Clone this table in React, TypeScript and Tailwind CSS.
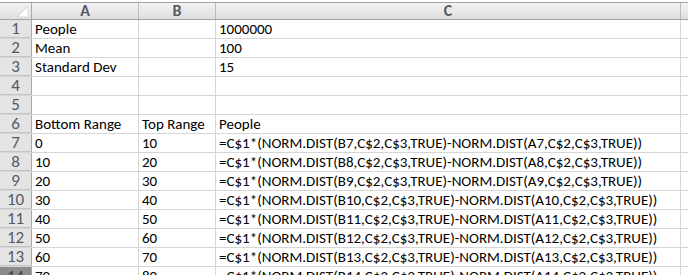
import { FC } from "react";

const cols = [
  { key: "A", width: 107 },
  { key: "B", width: 77 },
  { key: "C", width: 465 },
];

const formula = (n: number) =>
  `=C$1*(NORM.DIST(B${n},C$2,C$3,TRUE)-NORM.DIST(A${n},C$2,C$3,TRUE))`;

const rows: string[][] = [
  ["People", "", "1000000"],
  ["Mean", "", "100"],
  ["Standard Dev", "", "15"],
  ["", "", ""],
  ["", "", ""],
  ["Bottom Range", "Top Range", "People"],
  ...[0, 1, 2, 3, 4, 5, 6, 7].map((i) => [String(i * 10), String(i * 10 + 10), formula(i + 7)]),
];

const font = { fontFamily: "Carlito, 'Open Sans', 'Noto Sans', sans-serif" };

const Corner: FC = () => (
  <div className="w-[32px] h-full border-r border-[#a9a9a9] relative shrink-0">
    <svg className="absolute right-[3px] bottom-[2px]" width="11" height="11" viewBox="0 0 11 11">
      <polygon points="11,0 11,11 0,11" fill="#ffffff" />
      <polygon points="11,0 11,11 0,11" fill="none" stroke="#c8c8c8" strokeWidth="0.8" />
    </svg>
  </div>
);

export default function App() {
  return (
    <div className="w-[688px] h-[275px] overflow-hidden bg-white pt-[2px]" style={font}>
      {/* column headers */}
      <div className="flex h-[18px] border-y border-[#a3a3a3] bg-gradient-to-b from-[#f3f3f3] to-[#dedede]">
        <Corner />
        {cols.map((c) => (
          <div
            key={c.key}
            style={{ width: c.width }}
            className="shrink-0 border-r border-[#bcbcbc] flex items-center justify-center text-[16px] font-bold text-[#555a60] leading-none"
          >
            {c.key}
          </div>
        ))}
        <div className="flex-1" />
      </div>
      {rows.map((r, i) => {
        const selected = i === 13;
        return (
          <div key={i} className="flex h-[19px] border-b border-[#d6d6d6]">
            <div
              className={
                selected
                  ? "w-[32px] shrink-0 border-r border-[#a9a9a9] bg-[#8c8c8c] text-[#444] flex items-center justify-center text-[17px] font-medium leading-none"
                  : "w-[32px] shrink-0 border-r border-[#a9a9a9] border-b border-b-[#c4c4c4] bg-[#e4e4e4] text-[#555a60] flex items-center justify-center text-[17px] font-medium leading-none"
              }
            >
              {i + 1}
            </div>
            {cols.map((c, j) => (
              <div
                key={c.key}
                style={{ width: c.width }}
                className="shrink-0 border-r border-[#d6d6d6] pl-[3px] flex items-center text-[15px] text-black whitespace-nowrap overflow-hidden leading-none"
              >
                {r[j]}
              </div>
            ))}
            <div className="flex-1" />
          </div>
        );
      })}
    </div>
  );
}
